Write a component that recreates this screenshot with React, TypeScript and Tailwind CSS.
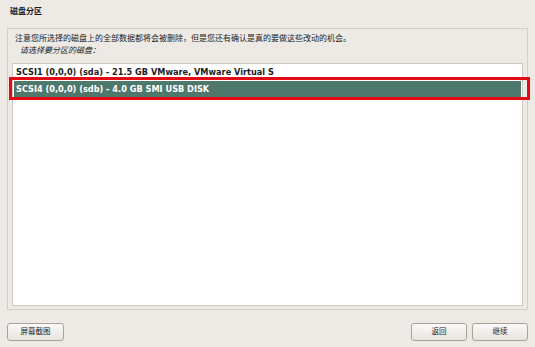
export default function App() {
  const disks = [
    { label: "SCSI1 (0,0,0) (sda) - 21.5 GB VMware, VMware Virtual S", selected: false },
    { label: "SCSI4 (0,0,0) (sdb) - 4.0 GB SMI USB DISK", selected: true },
  ];

  return (
    <div
      className="w-[535px] h-[347px] bg-[#EDEAE6] text-[#1c1c1c] flex flex-col overflow-hidden"
      style={{ fontFamily: '"DejaVu Sans", "Noto Sans CJK SC", sans-serif' }}
    >
      {/* 标题 */}
      <div className="h-[28px] pl-[10px] pt-[7px] text-[8px] font-bold leading-[10px]">磁盘分区</div>

      {/* 主面板 */}
      <div className="mx-[7px] w-[521px] h-[282px] border border-[#D5CFC7] flex flex-col px-[4px] pb-[3px]">
        <p className="pl-[3px] pt-[4px] text-[8px] leading-[12px]">
          注意您所选择的磁盘上的全部数据都将会被删除，但是您还有确认是真的要做这些改动的机会。
        </p>
        <p className="pl-[8px] text-[8px] leading-[12px] italic">请选择要分区的磁盘：</p>

        <div className="mt-[6px] flex-1 bg-white border border-[#CFC9C1] relative">
          <ul className="flex flex-col">
            {disks.map((d) => (
              <li
                key={d.label}
                className={
                  d.selected
                    ? "h-[16px] mt-[1px] mx-[1px] bg-[#4F786D] text-white text-[8.2px] font-bold leading-[16px] pl-[2px] whitespace-nowrap"
                    : "h-[16px] text-[8.2px] font-bold leading-[16px] pl-[3px] whitespace-nowrap"
                }
              >
                {d.label}
              </li>
            ))}
          </ul>
          {/* 红色标注框 */}
          <div className="absolute left-[-4px] top-[13px] w-[521px] h-[23px] border-[3px] border-[#E50914] pointer-events-none" />
        </div>
      </div>

      {/* 按钮 */}
      <div className="flex items-center mt-[13px] px-[7px]">
        <button className="w-[57px] h-[18px] rounded-[3px] border border-[#A9A298] bg-gradient-to-b from-[#FBFAF8] to-[#E7E3DD] text-[7.5px] leading-none">
          屏幕截图
        </button>
        <div className="flex-1" />
        <button className="w-[56px] h-[18px] rounded-[3px] border border-[#A9A298] bg-gradient-to-b from-[#FBFAF8] to-[#E7E3DD] text-[7.5px] leading-none">
          返回
        </button>
        <button className="ml-[5px] w-[56px] h-[18px] rounded-[3px] border border-[#A9A298] bg-gradient-to-b from-[#FBFAF8] to-[#E7E3DD] text-[7.5px] leading-none">
          继续
        </button>
      </div>
    </div>
  );
}
